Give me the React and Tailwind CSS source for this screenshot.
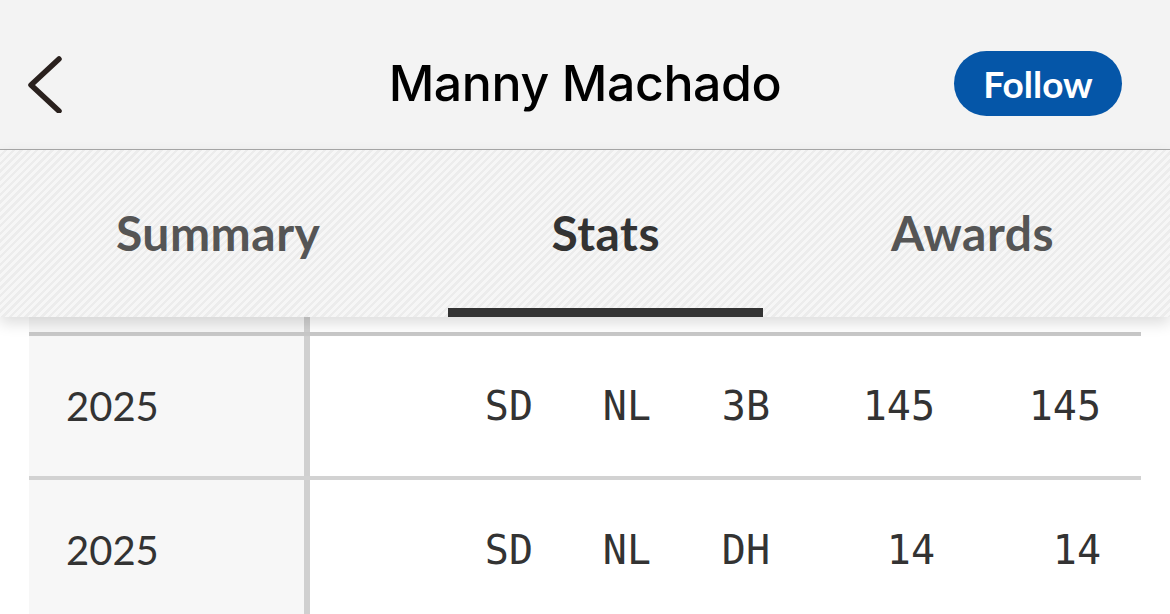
import React from 'react';

const rows = [
  { year: '2025', team: 'SD', lg: 'NL', pos: '3B', g: '145', gs: '145' },
  { year: '2025', team: 'SD', lg: 'NL', pos: 'DH', g: '14', gs: '14' },
];

export default function App() {
  return (
    <div className="w-[1170px] h-[614px] overflow-hidden bg-white">
      {/* Header */}
      <div className="h-[150px] pt-[17px] bg-[#f3f3f3] border-b border-[#a8a8a8] grid grid-cols-[1fr_auto_1fr] items-center">
        <div className="pl-[26px]">
          <svg width="40" height="60" viewBox="0 0 40 60" fill="none">
            <polyline points="33,6 5,32 33,58" stroke="#2a211e" strokeWidth="5.5" strokeLinecap="round" strokeLinejoin="round" />
          </svg>
        </div>
        <h1 className="font-['Inter',sans-serif] font-medium text-[50px] text-black tracking-[-0.4px] leading-none">Manny Machado</h1>
        <div className="flex justify-end pr-[48px]">
          <button className="w-[168px] h-[65px] rounded-full bg-[#0556a8] text-white font-['Lato',sans-serif] font-bold text-[37px] leading-none">
            Follow
          </button>
        </div>
      </div>

      {/* Tabs */}
      <div className="relative z-10 h-[167px] flex justify-center gap-[25px] bg-[#f4f4f4] bg-[repeating-linear-gradient(135deg,#f6f6f6_0px,#f6f6f6_3px,#ececec_3px,#ececec_5.5px)] shadow-[0_6px_14px_rgba(0,0,0,0.14)] font-['Lato',sans-serif] font-bold text-[48px] tracking-[0.5px]">
        <div className="px-[103px] flex items-center text-[#555] pb-[2px]">Summary</div>
        <div className="px-[103px] flex items-center text-[#333] relative pb-[2px]">
          Stats
          <div className="absolute left-0 right-0 bottom-0 h-[9px] bg-[#333]" />
        </div>
        <div className="px-[103px] flex items-center text-[#555] pb-[2px]">Awards</div>
      </div>

      {/* Table */}
      <div className="ml-[29px] w-[1112px] text-[#333]">
        <div className="flex h-[19px] border-b-4 border-[#c8c8c8]">
          <div className="w-[281px] bg-[#f7f7f7] border-r-[6px] border-[#d0d0d0]" />
          <div className="flex-1" />
        </div>
        {rows.map((r, i) => (
          <div key={i} className="flex h-[144px] border-b-4 border-[#d2d2d2]">
            <div className="w-[281px] bg-[#f7f7f7] border-r-[6px] border-[#d0d0d0] flex items-center pl-[37px] font-['Lato',sans-serif] text-[40px]">
              {r.year}
            </div>
            <div className="flex-1 flex items-center font-['DejaVu_Sans_Mono',monospace] text-[40px]">
              <div className="w-[223px] text-right">{r.team}</div>
              <div className="w-[118px] text-right">{r.lg}</div>
              <div className="w-[119px] text-right">{r.pos}</div>
              <div className="w-[165px] text-right">{r.g}</div>
              <div className="w-[166px] text-right">{r.gs}</div>
            </div>
          </div>
        ))}
      </div>
    </div>
  );
}
